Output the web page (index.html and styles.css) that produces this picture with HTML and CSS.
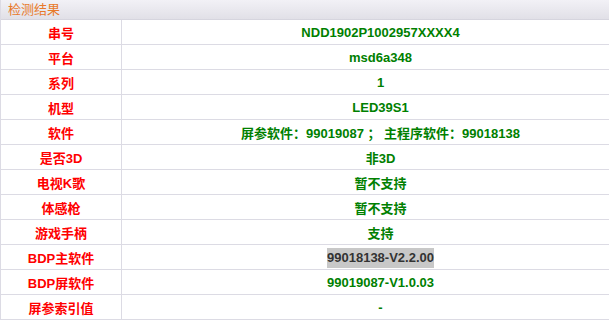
FILE: index.html
```html
<!DOCTYPE html>
<html>
<head>
<meta charset="utf-8">
<link rel="stylesheet" href="styles.css">
</head>
<body>
<div class="panel">
  <div class="panel-head">检测结果</div>
  <table class="result">
    <tr><td class="label">串号</td><td class="value">NDD1902P1002957XXXX4</td></tr>
    <tr><td class="label">平台</td><td class="value">msd6a348</td></tr>
    <tr><td class="label">系列</td><td class="value">1</td></tr>
    <tr><td class="label">机型</td><td class="value">LED39S1</td></tr>
    <tr><td class="label">软件</td><td class="value">屏参软件：99019087 ； 主程序软件：99018138</td></tr>
    <tr><td class="label">是否3D</td><td class="value">非3D</td></tr>
    <tr><td class="label">电视K歌</td><td class="value">暂不支持</td></tr>
    <tr><td class="label">体感枪</td><td class="value">暂不支持</td></tr>
    <tr><td class="label">游戏手柄</td><td class="value">支持</td></tr>
    <tr><td class="label">BDP主软件</td><td class="value"><span class="sel">99018138-V2.2.00</span></td></tr>
    <tr><td class="label">BDP屏软件</td><td class="value">99019087-V1.0.03</td></tr>
    <tr><td class="label">屏参索引值</td><td class="value">-</td></tr>
  </table>
</div>
</body>
</html>
```

FILE: styles.css
```css
html, body {
  margin: 0;
  padding: 0;
  background: #ffffff;
}
body {
  font-family: "Liberation Sans", "Noto Sans CJK SC", sans-serif;
  font-size: 13px;
}
.panel {
  width: 609px;
  box-sizing: border-box;
  border-left: 1px solid #dcdbe4;
}
.panel-head {
  height: 20px;
  box-sizing: border-box;
  padding-left: 7px;
  line-height: 19px;
  color: #e8792a;
  font-size: 13px;
  background: linear-gradient(#f2f1f6, #e1e0e7);
  border-bottom: 1px solid #d6d5de;
}
.result {
  width: 100%;
  border-collapse: collapse;
}
.result td {
  height: 24px;
  padding: 0;
  text-align: center;
  font-weight: bold;
  border-bottom: 1px solid #dcdbe4;
}
.label {
  width: 120px;
  color: #ff0000;
  border-right: 1px solid #dcdbe4;
}
.result .value {
  color: #008000;
  padding-left: 30px;
}
.sel {
  background: #c8c8c8;
  color: #333333;
  padding: 2px 0 3px;
}
```
